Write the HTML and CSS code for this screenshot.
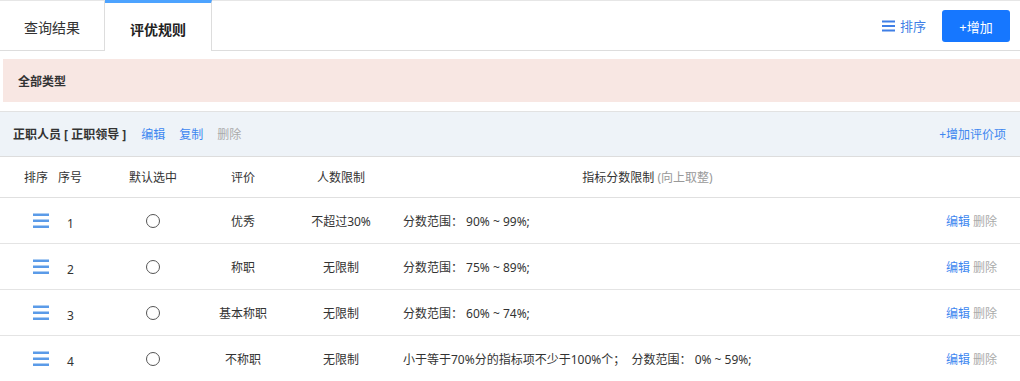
FILE: index.html
```html
<!DOCTYPE html>
<html lang="zh-CN">
<head>
<meta charset="utf-8">
<title>评优规则</title>
<link rel="stylesheet" href="styles.css">
</head>
<body>
<div class="page">
  <div class="tabbar">
    <div class="tab">查询结果</div>
    <div class="tab active">评优规则</div>
    <div class="tab-tools">
      <a class="sort-link">
        <svg class="sort-ico" width="13" height="12" viewBox="0 0 13 12"><rect x="0" y="0.5" width="13" height="2" fill="#3f7fe6"/><rect x="0" y="5" width="13" height="2" fill="#3f7fe6"/><rect x="0" y="9.5" width="13" height="2" fill="#3f7fe6"/></svg>
        <span>排序</span>
      </a>
      <button class="btn-add">+增加</button>
    </div>
  </div>

  <div class="type-bar">全部类型</div>

  <div class="group-head">
    <span class="group-title">正职人员 [ 正职领导 ]</span>
    <a class="link">编辑</a>
    <a class="link">复制</a>
    <a class="link disabled">删除</a>
    <a class="link add-item">+增加评价项</a>
  </div>

  <div class="table">
    <div class="row head">
      <div class="c-sort">排序</div>
      <div class="c-no">序号</div>
      <div class="c-def">默认选中</div>
      <div class="c-eval">评价</div>
      <div class="c-limit">人数限制</div>
      <div class="c-score">指标分数限制 <span class="muted">(向上取整)</span></div>
      <div class="c-act"></div>
    </div>

    <div class="row">
      <div class="c-sort"><svg class="drag" width="16" height="15" viewBox="0 0 16 15"><rect y="0.5" width="16" height="2.5" fill="#5b9be8"/><rect y="6.5" width="16" height="2.5" fill="#5b9be8"/><rect y="12.5" width="16" height="2.5" fill="#5b9be8"/></svg></div>
      <div class="c-no num">1</div>
      <div class="c-def"><span class="radio"></span></div>
      <div class="c-eval">优秀</div>
      <div class="c-limit">不超过30%</div>
      <div class="c-score">分数范围： 90% ~ 99%;</div>
      <div class="c-act"><a class="link">编辑</a><a class="link disabled">删除</a></div>
    </div>

    <div class="row">
      <div class="c-sort"><svg class="drag" width="16" height="15" viewBox="0 0 16 15"><rect y="0.5" width="16" height="2.5" fill="#5b9be8"/><rect y="6.5" width="16" height="2.5" fill="#5b9be8"/><rect y="12.5" width="16" height="2.5" fill="#5b9be8"/></svg></div>
      <div class="c-no num">2</div>
      <div class="c-def"><span class="radio"></span></div>
      <div class="c-eval">称职</div>
      <div class="c-limit">无限制</div>
      <div class="c-score">分数范围： 75% ~ 89%;</div>
      <div class="c-act"><a class="link">编辑</a><a class="link disabled">删除</a></div>
    </div>

    <div class="row">
      <div class="c-sort"><svg class="drag" width="16" height="15" viewBox="0 0 16 15"><rect y="0.5" width="16" height="2.5" fill="#5b9be8"/><rect y="6.5" width="16" height="2.5" fill="#5b9be8"/><rect y="12.5" width="16" height="2.5" fill="#5b9be8"/></svg></div>
      <div class="c-no num">3</div>
      <div class="c-def"><span class="radio"></span></div>
      <div class="c-eval">基本称职</div>
      <div class="c-limit">无限制</div>
      <div class="c-score">分数范围： 60% ~ 74%;</div>
      <div class="c-act"><a class="link">编辑</a><a class="link disabled">删除</a></div>
    </div>

    <div class="row">
      <div class="c-sort"><svg class="drag" width="16" height="15" viewBox="0 0 16 15"><rect y="0.5" width="16" height="2.5" fill="#5b9be8"/><rect y="6.5" width="16" height="2.5" fill="#5b9be8"/><rect y="12.5" width="16" height="2.5" fill="#5b9be8"/></svg></div>
      <div class="c-no num">4</div>
      <div class="c-def"><span class="radio"></span></div>
      <div class="c-eval">不称职</div>
      <div class="c-limit">无限制</div>
      <div class="c-score">小于等于70%分的指标项不少于100%个；&nbsp;&nbsp;分数范围： 0% ~ 59%;</div>
      <div class="c-act"><a class="link">编辑</a><a class="link disabled">删除</a></div>
    </div>
  </div>
</div>
</body>
</html>
```

FILE: styles.css
```css
* { box-sizing: border-box; }
html, body { margin: 0; padding: 0; background: #fff; }
body {
  font-family: "Noto Sans", "Noto Sans CJK SC", sans-serif;
  font-size: 12px;
  color: #333;
}
.page { width: 1020px; overflow: hidden; }

/* tabs */
.tabbar {
  display: flex;
  height: 51px;
  border-top: 1px solid #e6e6e6;
  border-bottom: 1px solid #dddddd;
}
.tab {
  width: 105px;
  border-right: 1px solid #dddddd;
  display: flex;
  align-items: center;
  justify-content: center;
  font-size: 14px;
  color: #333;
  padding-top: 2px;
}
.tab.active {
  width: 107px;
  margin-top: -1px;
  margin-bottom: -1px;
  border-top: 3px solid #4da3ff;
  background: #fff;
  font-weight: bold;
  color: #222;
  padding-top: 3px;
}
.tab-tools {
  margin-left: auto;
  display: flex;
  align-items: center;
  padding-right: 10px;
}
.sort-link {
  display: flex;
  align-items: center;
  gap: 5px;
  color: #3f7fe6;
  font-size: 13px;
  margin-right: 16px;
  cursor: pointer;
}
.sort-ico { display: block; }
.btn-add {
  width: 68px;
  height: 32px;
  border: none;
  border-radius: 3px;
  background: #1677ff;
  color: #fff;
  font-family: inherit;
  font-size: 13px;
  padding: 0;
  margin-top: 1px;
}

/* type bar */
.type-bar {
  margin: 8px 0 0 3px;
  height: 43px;
  background: #f8e7e3;
  display: flex;
  align-items: center;
  padding-left: 15px;
  font-weight: bold;
  color: #333;
}

/* group header */
.group-head {
  margin-top: 9px;
  height: 46px;
  background: #eef3f8;
  border-top: 1px solid #e2e2e2;
  border-bottom: 1px solid #dddddd;
  display: flex;
  align-items: center;
  padding: 0 14px 0 13px;
}
.group-title { font-weight: bold; color: #333; margin-right: 1px; }
.link { color: #3d87f0; cursor: pointer; margin-left: 14px; }
.link.disabled { color: #aaaaaa; }
.add-item { margin-left: auto; }

/* table */
.row {
  display: grid;
  grid-template-columns: 52px 36px 108px 94px 102px 1fr 117px;
  align-items: center;
  height: 46px;
  border-bottom: 1px solid #e4e4e4;
}
.row.head { height: 41px; border-bottom-color: #e0e0e0; }
.c-sort { padding-left: 33px; display: flex; align-items: center; }
.head .c-sort { padding-left: 24px; }
.drag { display: block; }
.c-no { padding-left: 6px; }
.num { padding-left: 15px; padding-top: 5px; }
.c-def { text-align: center; padding-left: 22px; display: flex; justify-content: center; }
.c-eval, .c-limit { text-align: center; }
.c-score { padding-left: 11px; white-space: nowrap; }
.head .c-score { text-align: center; padding-left: 0; }
.muted { color: #999; }
.c-act { text-align: right; padding-right: 23px; }
.c-act .link { margin-left: 3px; }
.radio {
  display: block;
  width: 14px;
  height: 14px;
  border: 1px solid #555;
  border-radius: 50%;
  background: #fff;
}
```
